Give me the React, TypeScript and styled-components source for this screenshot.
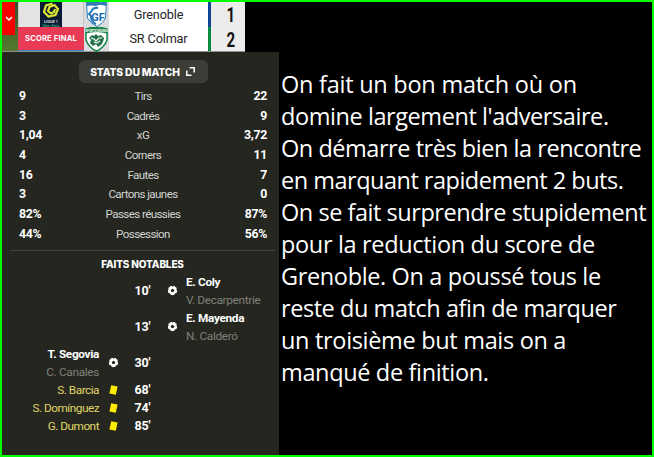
import React from "react";
import styled, { createGlobalStyle } from "styled-components";

const GlobalStyle = createGlobalStyle`
  * {
    box-sizing: border-box;
  }

  body {
    margin: 0;
    background: #000;
  }
`;

const Page = styled.div`
  width: 654px;
  height: 457px;
  display: flex;
  border: 2px solid #00ff00;
  background: #000;
  overflow: hidden;
  font-family: Roboto, "Liberation Sans", sans-serif;
`;

const MatchColumn = styled.div`
  width: 277px;
  flex: none;
  display: flex;
  flex-direction: column;
`;

const Scoreboard = styled.header`
  width: 243px;
  height: 50px;
  display: flex;
  background: #fff;
  border-bottom: 1px solid #8e9390;
`;

const Pitch = styled.div`
  width: 16px;
  background: linear-gradient(#35502f, #557a2e);
`;

const Toggle = styled.div`
  width: 13px;
  height: 33px;
  display: flex;
  align-items: center;
  justify-content: center;
  background: #f80000;
`;

const Competition = styled.div`
  width: 66px;
  display: flex;
  flex-direction: column;
`;

const LeagueCell = styled.div`
  height: 25px;
  display: flex;
  justify-content: center;
  border: solid #c4c6c8;
  border-width: 0 1px;
  background: #e3e3e3;
`;

const Status = styled.div`
  height: 24px;
  display: flex;
  align-items: center;
  justify-content: center;
  background: #e83a54;
  border-bottom: 1px solid #3385c8;
  color: #fff;
  font: 700 7.6px Inter, sans-serif;
  letter-spacing: 0.15px;
  white-space: nowrap;
`;

const Teams = styled.div`
  flex: 1;
  display: flex;
  flex-direction: column;
`;

const Team = styled.div`
  height: 24.5px;
  display: flex;
`;

const Crest = styled.div`
  width: 25px;
  display: flex;
  background: #d9dcde;
`;

const TeamName = styled.div<{ $accent: string }>`
  flex: 1;
  display: flex;
  align-items: center;
  justify-content: center;
  border-right: 3px solid ${({ $accent }) => $accent};
  color: #25272a;
  font-size: 12.7px;
  letter-spacing: -0.15px;
`;

const Score = styled.div`
  width: 34px;
  display: flex;
  align-items: center;
  justify-content: center;
  padding: 2px 0 0 5px;
  background: #ececec;
  color: #111;
  font-size: 20px;
  font-weight: 700;

  span {
    transform: scaleX(0.75);
  }
`;

const Panel = styled.main`
  flex: 1;
  display: flex;
  flex-direction: column;
  background: #24261f;
  color: #fff;
`;

const StatsButton = styled.button`
  width: 129px;
  height: 23px;
  flex: none;
  margin: 8px 0 3px 77px;
  padding: 0 2px 0 0;
  display: flex;
  align-items: center;
  justify-content: center;
  gap: 6px;
  border: none;
  border-radius: 6px;
  background: #3b3d37;
  color: #fff;
  font: 800 10.3px Inter, sans-serif;
  letter-spacing: -0.15px;
`;

const StatRow = styled.div`
  height: 19.7px;
  flex: none;
  display: grid;
  grid-template-columns: 60px 1fr 60px;
  align-items: center;
  padding: 0 12px 0 17px;
`;

const StatValue = styled.span<{ $right?: boolean }>`
  text-align: ${({ $right }) => ($right ? "right" : "left")};
  font-size: 12.3px;
  font-weight: 700;
  letter-spacing: -0.3px;
`;

const StatLabel = styled.span`
  text-align: center;
  color: #d2d3d0;
  font-size: 11.6px;
  letter-spacing: -0.6px;
  white-space: nowrap;
`;

const Divider = styled.div`
  height: 1px;
  flex: none;
  margin: 6px 4px 5px 8px;
  background: #41433d;
`;

const Heading = styled.h2`
  height: 16px;
  margin: 0 0 1px 4px;
  text-align: center;
  font: 800 10px/16px Inter, sans-serif;
  letter-spacing: -0.15px;
`;

const EventRow = styled.div<{ $tall?: boolean }>`
  height: ${({ $tall }) => ($tall ? 36 : 18)}px;
  display: grid;
  grid-template-columns: 97px 28px 31px 28px 1fr;
  align-items: center;
`;

const Players = styled.div<{ $right?: boolean }>`
  display: flex;
  flex-direction: column;
  text-align: ${({ $right }) => ($right ? "left" : "right")};
`;

const Player = styled.span<{ $kind: "scorer" | "assist" | "booked" }>`
  height: 18px;
  line-height: 18px;
  font-size: 11.8px;
  letter-spacing: ${({ $kind }) => ($kind === "booked" ? -0.5 : -0.32)}px;
  white-space: nowrap;
  font-weight: ${({ $kind }) => ($kind === "scorer" ? 700 : 400)};
  color: ${({ $kind }) =>
    ({ scorer: "#fff", assist: "#7f817a", booked: "#e0d567" })[$kind]};
`;

const IconCell = styled.div`
  display: flex;
  justify-content: center;
`;

const Minute = styled.span`
  text-align: center;
  font-size: 12.5px;
  font-weight: 700;
  letter-spacing: -0.2px;
`;

const Comment = styled.section`
  flex: 1;
  padding: 66px 0 0 2px;
  color: #fff;
  font-family: "Open Sans", "Noto Sans", sans-serif;
  font-size: 23.5px;
  line-height: 32px;
`;

const CommentLine = styled.div<{ $spacing: number }>`
  white-space: nowrap;
  letter-spacing: ${({ $spacing }) => $spacing}px;
`;

const stats = [
  ["9", "Tirs", "22"],
  ["3", "Cadrés", "9"],
  ["1,04", "xG", "3,72"],
  ["4", "Corners", "11"],
  ["16", "Fautes", "7"],
  ["3", "Cartons jaunes", "0"],
  ["82%", "Passes réussies", "87%"],
  ["44%", "Possession", "56%"],
];

interface MatchEvent {
  minute: string;
  player: string;
  assist?: string;
  away?: boolean;
}

const events: MatchEvent[] = [
  { minute: "10'", player: "E. Coly", assist: "V. Decarpentrie", away: true },
  { minute: "13'", player: "E. Mayenda", assist: "N. Calderó", away: true },
  { minute: "30'", player: "T. Segovia", assist: "C. Canales" },
  { minute: "68'", player: "S. Barcia" },
  { minute: "74'", player: "S. Domínguez" },
  { minute: "85'", player: "G. Dumont" },
];

const comment: [string, number][] = [
  ["On fait un bon match où on", -0.25],
  ["domine largement l'adversaire.", -0.43],
  ["On démarre très bien la rencontre", -0.46],
  ["en marquant rapidement 2 buts.", -0.5],
  ["On se fait surprendre stupidement", -0.46],
  ["pour la reduction du score de", -0.33],
  ["Grenoble. On a poussé tous le", -0.36],
  ["reste du match afin de marquer", -0.44],
  ["un troisième but mais on a", -0.32],
  ["manqué de finition.", -0.35],
];

const LeagueLogo = () => (
  <svg width="22" height="25" viewBox="0 0 22 25">
    <rect width="22" height="25" fill="#0b1b33" />
    <path
      d="M12.500 1.500 6 3.500 4 10l4.500 4.500 7-1.500L18 7l-3.500-4-5 2L8 9l3 2.500 3-1.500 1-3"
      fill="none"
      stroke="#dbe635"
      strokeWidth="2.200"
    />
    <text x="11" y="20.500" textAnchor="middle" fontSize="4" fontWeight="700" fill="#d5dbe2">
      LIGUE 1
    </text>
    <text x="11" y="24.800" textAnchor="middle" fontSize="4" fontWeight="700" fill="#2c9f77">
      Uber Eats
    </text>
  </svg>
);

const GrenobleCrest = () => (
  <svg width="25" height="25" viewBox="0 0 25 25">
    <path d="M2.500 0h20l-1 16q-2 5-8.500 8.500Q6 21 3.500 16Z" fill="#fff" stroke="#2c7dbd" />
    <path d="M3 0h19v4q-6-2-10 0-5-1-9 0Z" fill="#347dba" />
    <path d="M14 6q-5-1-7 4l-2 2 2 2q-1 5 5 8" fill="none" stroke="#2579bb" strokeWidth="2" />
    <text x="14" y="19" textAnchor="middle" fontSize="11" fontWeight="700" fill="#1767ad">
      GF
    </text>
  </svg>
);

const ColmarCrest = () => (
  <svg width="25" height="25" viewBox="0 0 25 25">
    <path d="M2 2q10-3 21 0v11q-3 8-10.500 11Q5 21 2 13Z" fill="#fff" stroke="#158447" strokeWidth="1.500" />
    <path d="M1.500 2q10-4 22 0v4.500q-11-3-22 0Z" fill="#177e45" />
    <text x="12.500" y="4.500" textAnchor="middle" fontSize="3" fontWeight="700" fill="#fff">
      SPORTS RÉUNIS
    </text>
    <path d="m5 11 3-3 2 1 2-2 2 2 3-1 3 3-1 4-2 3-3 2-2-3-3 2-3-3 1-3Z" fill="#26734c" />
    <path d="m7 11 3 1 2 2 3-3 3 0M10 15l3 1 3-2" fill="none" stroke="#fff" strokeWidth="1.100" />
  </svg>
);

const Ball = () => (
  <svg width="11" height="11" viewBox="0 0 11 11">
    <circle cx="5.500" cy="5.500" r="4.700" fill="#fff" />
    <path d="m5.500 3.700 1.800 1.300-.7 2.100H4.400L3.700 5Z" fill="#24261f" />
    <path d="M4.300 0h2.400L5.500 1.900ZM0 3.200l1.800 1.200L.2 6.200ZM11 3.200l-1.800 1.200 1.600 1.800ZM1.600 10l1-2.200 1.400 2.700ZM9.400 10l-1-2.200-1.400 2.700Z" fill="#24261f" />
  </svg>
);

const YellowCard = () => (
  <svg width="9" height="10" viewBox="0 0 9 10">
    <path d="M2.200.3 8.600 1.400 6.800 9.700.4 8.600Z" fill="#ffec00" />
  </svg>
);

const Event = ({ minute, player, assist, away }: MatchEvent) => {
  const names = (
    <Players $right={away}>
      <Player $kind={assist ? "scorer" : "booked"}>{player}</Player>
      {assist && <Player $kind="assist">{assist}</Player>}
    </Players>
  );
  const icon = <IconCell>{assist ? <Ball /> : <YellowCard />}</IconCell>;

  return (
    <EventRow $tall={!!assist}>
      {away ? <span /> : names}
      {away ? <span /> : icon}
      <Minute>{minute}</Minute>
      {away && icon}
      {away && names}
    </EventRow>
  );
};

const App = () => (
  <>
    <GlobalStyle />
    <Page>
      <MatchColumn>
        <Scoreboard>
          <Pitch>
            <Toggle>
              <svg width="8" height="6" viewBox="0 0 8 6">
                <path d="m1 1 3 3 3-3" fill="none" stroke="#fff" strokeWidth="1.500" />
              </svg>
            </Toggle>
          </Pitch>
          <Competition>
            <LeagueCell>
              <LeagueLogo />
            </LeagueCell>
            <Status>SCORE FINAL</Status>
          </Competition>
          <Teams>
            <Team>
              <Crest>
                <GrenobleCrest />
              </Crest>
              <TeamName $accent="#0e4595">Grenoble</TeamName>
              <Score>
                <span>1</span>
              </Score>
            </Team>
            <Team>
              <Crest>
                <ColmarCrest />
              </Crest>
              <TeamName $accent="#088a40">SR Colmar</TeamName>
              <Score>
                <span>2</span>
              </Score>
            </Team>
          </Teams>
        </Scoreboard>
        <Panel>
          <StatsButton>
            STATS DU MATCH
            <svg width="9" height="9" viewBox="0 0 9 9">
              <path d="M3.500.8h4.700v4.700M.8 3.500v4.700h4.700" fill="none" stroke="#fff" strokeWidth="1.500" />
            </svg>
          </StatsButton>
          {stats.map(([home, label, away]) => (
            <StatRow key={label}>
              <StatValue>{home}</StatValue>
              <StatLabel>{label}</StatLabel>
              <StatValue $right>{away}</StatValue>
            </StatRow>
          ))}
          <Divider />
          <Heading>FAITS NOTABLES</Heading>
          {events.map((event) => (
            <Event key={event.minute} {...event} />
          ))}
        </Panel>
      </MatchColumn>
      <Comment>
        {comment.map(([text, spacing]) => (
          <CommentLine key={text} $spacing={spacing}>
            {text}
          </CommentLine>
        ))}
      </Comment>
    </Page>
  </>
);

export default App;
